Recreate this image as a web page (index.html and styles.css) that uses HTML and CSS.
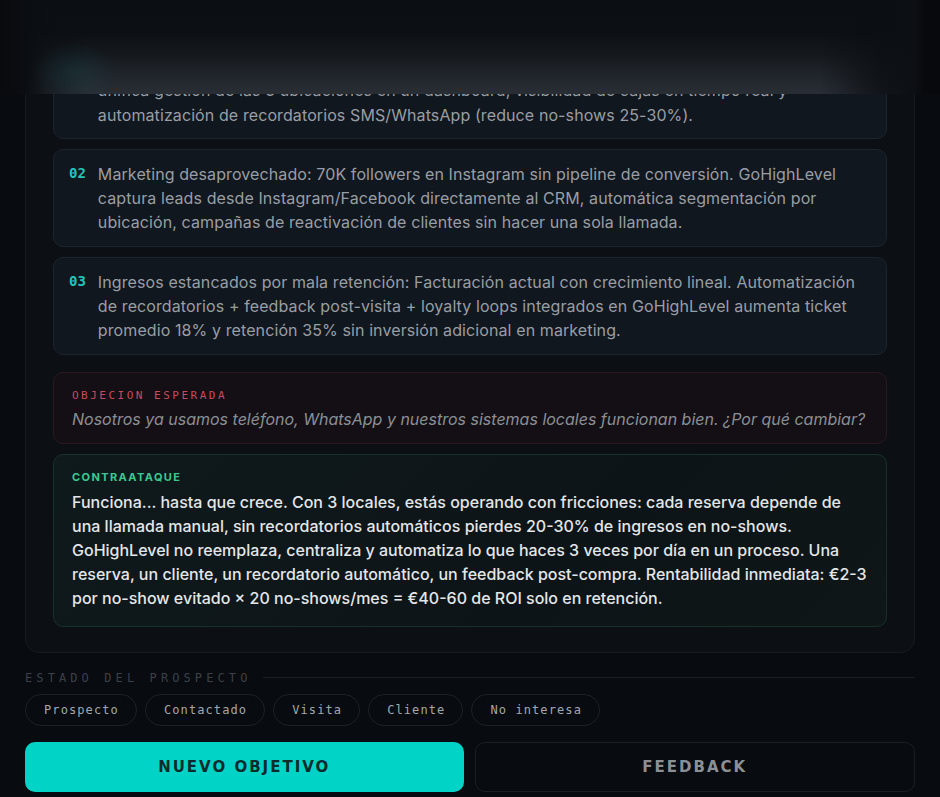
FILE: index.html
```html
<!DOCTYPE html>
<html lang="es">
<head>
<meta charset="utf-8">
<title>Prospecto</title>
<link rel="stylesheet" href="styles.css">
</head>
<body>
<div class="topbar"></div>
<main class="page">
  <section class="panel">
    <div class="panel-title">PUNTOS DE DOLOR</div>
    <div class="items">
      <div class="item">
        <span class="num">01</span>
        <p class="item-text">Operación fragmentada: 3 locales con agendas y cajas independientes. GoHighLevel<br>unifica gestión de las 3 ubicaciones en un dashboard, visibilidad de cajas en tiempo real y automatización de recordatorios SMS/WhatsApp (reduce no-shows 25-30%).</p>
      </div>
      <div class="item">
        <span class="num">02</span>
        <p class="item-text">Marketing desaprovechado: 70K followers en Instagram sin pipeline de conversión. GoHighLevel captura leads desde Instagram/Facebook directamente al CRM, automática segmentación por ubicación, campañas de reactivación de clientes sin hacer una sola llamada.</p>
      </div>
      <div class="item">
        <span class="num">03</span>
        <p class="item-text">Ingresos estancados por mala retención: Facturación actual con crecimiento lineal. Automatización de recordatorios + feedback post-visita + loyalty loops integrados en GoHighLevel aumenta ticket promedio 18% y retención 35% sin inversión adicional en marketing.</p>
      </div>
    </div>
    <div class="objection">
      <div class="obj-label">OBJECION ESPERADA</div>
      <p class="obj-text">Nosotros ya usamos teléfono, WhatsApp y nuestros sistemas locales funcionan bien. ¿Por qué cambiar?</p>
    </div>
    <div class="counter">
      <div class="counter-label">CONTRAATAQUE</div>
      <p class="counter-text">Funciona... hasta que crece. Con 3 locales, estás operando con fricciones: cada reserva depende de una llamada manual, sin recordatorios automáticos pierdes 20-30% de ingresos en no-shows. GoHighLevel no reemplaza, centraliza y automatiza lo que haces 3 veces por día en un proceso. Una reserva, un cliente, un recordatorio automático, un feedback post-compra. Rentabilidad inmediata: €2-3 por no-show evitado × 20 no-shows/mes = €40-60 de ROI solo en retención.</p>
    </div>
  </section>

  <div class="status">
    <div class="status-head">
      <span class="status-label">ESTADO DEL PROSPECTO</span>
      <span class="status-line"></span>
    </div>
    <div class="chips">
      <button class="chip">Prospecto</button>
      <button class="chip">Contactado</button>
      <button class="chip">Visita</button>
      <button class="chip">Cliente</button>
      <button class="chip">No interesa</button>
    </div>
  </div>

  <div class="actions">
    <button class="btn btn-primary">NUEVO OBJETIVO</button>
    <button class="btn btn-ghost">FEEDBACK</button>
  </div>
</main>
</body>
</html>
```
FILE: styles.css
```css
* { box-sizing: border-box; }
html, body {
  margin: 0;
  padding: 0;
  height: 100%;
  overflow: hidden;
}
body {
  background: #080b0f;
  font-family: Inter, "Noto Sans", sans-serif;
  color: #e4e6e8;
}
.topbar {
  position: fixed;
  top: 0;
  left: 0;
  right: 0;
  height: 94px;
  z-index: 10;
  background:
    radial-gradient(ellipse 42px 30px at 74px 72px, rgba(24, 92, 96, 0.22) 0%, rgba(24, 92, 96, 0) 100%),
    linear-gradient(90deg, #080a0e 0px, #0a0d11 25px, rgba(11, 14, 18, 0.6) 45px, rgba(11, 14, 18, 0) 90px, rgba(11, 14, 18, 0) 820px, rgba(11, 14, 18, 0.8) 880px, #0c0f14 915px, #07090c 925px),
    linear-gradient(180deg, #0b0e12 0px, #0c0f13 32px, #15191e 55px, #20252b 75px, #292e35 94px);
}
.page {
  margin-top: -17px;
  padding: 0 25px;
}
.panel {
  background: #0c1015;
  border: 1px solid #161b21;
  border-radius: 14px;
  padding: 27px 27px 25px;
}
.panel-title {
  font-family: "DejaVu Sans Mono", monospace;
  font-size: 11px;
  letter-spacing: 3px;
  color: #3b424a;
  line-height: 14px;
  margin-bottom: 16px;
}
.items {
  display: flex;
  flex-direction: column;
  gap: 10px;
}
.item {
  display: flex;
  gap: 12px;
  align-items: flex-start;
  background: #11171e;
  border: 1px solid #1d242c;
  border-radius: 10px;
  padding: 12px 15px 11px 15px;
}
.num {
  font-family: "DejaVu Sans Mono", monospace;
  font-weight: bold;
  font-size: 14px;
  line-height: 22px;
  color: #22c4b8;
  flex: none;
}
.item-text {
  margin: 0;
  font-size: 16px;
  letter-spacing: 0.1px;
  line-height: 24.3px;
  color: #999ea5;
}
.objection {
  margin-top: 17px;
  background: #140f14;
  border: 1px solid #2a1820;
  border-radius: 10px;
  padding: 16px 12px 12px 18px;
}
.obj-label {
  font-family: "DejaVu Sans Mono", monospace;
  font-size: 11px;
  letter-spacing: 2.5px;
  line-height: 14px;
  color: #c94a5c;
  margin-bottom: 4px;
}
.obj-text {
  margin: 0;
  font-style: italic;
  font-size: 16px;
  line-height: 24px;
  color: #8a8f96;
}
.counter {
  margin-top: 10px;
  background: linear-gradient(135deg, #0f1a1c 0%, #0d1417 60%, #0e1618 100%);
  border: 1px solid #16302a;
  border-radius: 10px;
  padding: 15px 18px 15px;
}
.counter-label {
  font-size: 11px;
  font-weight: 700;
  letter-spacing: 1.4px;
  line-height: 14px;
  color: #3cc98f;
  margin-bottom: 6px;
}
.counter-text {
  margin: 0;
  font-size: 16px;
  font-weight: 500;
  line-height: 24.2px;
  color: #e4e6e8;
}
.status {
  margin-top: 18px;
}
.status-head {
  display: flex;
  align-items: center;
  gap: 11px;
}
.status-label {
  font-family: "DejaVu Sans Mono", monospace;
  font-size: 12px;
  letter-spacing: 4.1px;
  line-height: 14px;
  color: #3a4149;
  white-space: nowrap;
}
.status-line {
  flex: 1;
  height: 1px;
  background: #1a1f25;
}
.chips {
  display: flex;
  gap: 8px;
  margin-top: 9px;
}
.chip {
  height: 32px;
  padding: 0 17px 0 18px;
  border: 1px solid #1c2128;
  border-radius: 16px;
  background: transparent;
  font-family: "DejaVu Sans Mono", monospace;
  font-size: 12px;
  letter-spacing: 1.1px;
  color: #a3a8ae;
}
.actions {
  display: flex;
  gap: 11px;
  margin-top: 16px;
}
.btn {
  flex: 1;
  height: 50px;
  border-radius: 10px;
  font-family: "DejaVu Sans", sans-serif;
  font-weight: bold;
  font-size: 15px;
  letter-spacing: 2px;
}
.btn-primary {
  background: #02d3c7;
  border: none;
  color: #0b2b2c;
}
.btn-ghost {
  background: transparent;
  border: 1px solid #1a1f26;
  color: #8b9096;
}
```
